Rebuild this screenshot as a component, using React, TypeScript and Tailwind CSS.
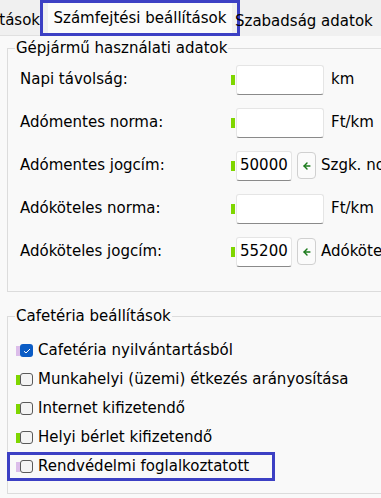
import { ArrowLeft } from "lucide-react"

const font = { fontFamily: '"DejaVu Sans", Tahoma, sans-serif' }

type Row = { label: string; value?: string; unit: string; button?: boolean }

const rows: Row[] = [
  { label: "Napi távolság:", unit: "km" },
  { label: "Adómentes norma:", unit: "Ft/km" },
  { label: "Adómentes jogcím:", value: "50000", unit: "Szgk. normaköltség", button: true },
  { label: "Adóköteles norma:", unit: "Ft/km" },
  { label: "Adóköteles jogcím:", value: "55200", unit: "Adóköteles jogcím", button: true },
]

const checks = [
  { label: "Cafetéria nyilvántartásból", checked: true, mark: "bg-[#dcbdea]" },
  { label: "Munkahelyi (üzemi) étkezés arányosítása", checked: false, mark: "bg-[#7fd600]" },
  { label: "Internet kifizetendő", checked: false, mark: "bg-[#7fd600]" },
  { label: "Helyi bérlet kifizetendő", checked: false, mark: "bg-[#7fd600]" },
  { label: "Rendvédelmi foglalkoztatott", checked: false, mark: "bg-[#dcbdea]" },
]

function Field({ row }: { row: Row }) {
  return (
    <div className="flex h-[43px] items-center">
      <div className="w-[223px] shrink-0 pl-[12px]">{row.label}</div>
      <div className="mr-[1px] h-[10px] w-[4px] shrink-0 bg-[#7fd600]" />
      {row.value ? (
        <>
          <div className="flex h-[30px] w-[56px] shrink-0 items-center rounded-[3px] border border-[#e5e5e5] border-b-[#8a8a8a] bg-white pl-[3px]">
            {row.value}
          </div>
          <div className="ml-[5px] flex h-[27px] w-[19px] shrink-0 items-center justify-center rounded-[4px] border border-[#d0d0d0] bg-[#fbfbfb]">
            <ArrowLeft size={10} strokeWidth={3.5} className="text-[#1a7a1a]" />
          </div>
          <div className="ml-[5px] whitespace-nowrap">{row.unit}</div>
        </>
      ) : (
        <>
          <div className="h-[30px] w-[88px] shrink-0 rounded-[3px] border border-[#e5e5e5] border-b-[#8a8a8a] bg-white" />
          <div className="ml-[7px] whitespace-nowrap">{row.unit}</div>
        </>
      )}
    </div>
  )
}

function Check({ label, checked, mark }: { label: string; checked: boolean; mark: string }) {
  return (
    <div className="flex h-[29px] items-center">
      <div className={`h-[10px] w-[4px] shrink-0 ${mark}`} />
      {checked ? (
        <div className="flex h-[13px] w-[13px] shrink-0 items-center justify-center rounded-[3px] bg-[#0b5cc5]">
          <svg width="8" height="6" viewBox="0 0 8 6" fill="none">
            <path d="M1 3.2 3 5 7 1" stroke="white" strokeWidth="1" />
          </svg>
        </div>
      ) : (
        <div className="h-[13px] w-[13px] shrink-0 rounded-[3px] border border-[#5a5a5a] bg-[#f4f4f4]" />
      )}
      <div className="ml-[5px] whitespace-nowrap">{label}</div>
    </div>
  )
}

export default function App() {
  return (
    <div style={font} className="h-[498px] w-[381px] overflow-hidden bg-[#f9f9f9] text-[15px] text-black">
      {/* tabs */}
      <div className="flex h-[36px] items-end bg-[#f0f0f0]">
        <div className="flex h-[30px] w-[40px] shrink-0 items-center justify-end overflow-hidden whitespace-nowrap border-b border-[#e0e0e0]">
          ítások
        </div>
        <div className="flex h-[36px] w-[200px] shrink-0 items-center justify-center border-[3px] border-[#3c40c4]">
          <div className="flex h-[30px] w-[184px] items-center justify-center whitespace-nowrap bg-[#fbfbfb]">
            Számfejtési beállítások
          </div>
        </div>
        <div className="relative -ml-[5px] flex h-[30px] items-center whitespace-nowrap">Szabadság adatok</div>
      </div>

      {/* vehicle group */}
      <div className="ml-[7px] mt-[12px] w-[400px] border border-[#dcdcdc] pb-[18px]">
        <div className="-mt-[10px] ml-[7px] w-fit bg-[#f9f9f9] px-[1px] leading-[18px]">
          Gépjármű használati adatok
        </div>
        <div className="mt-[1px]">
          {rows.map((r) => (
            <Field key={r.label} row={r} />
          ))}
        </div>
      </div>

      {/* cafeteria group */}
      <div className="ml-[7px] mt-[24px] w-[400px] border border-[#dcdcdc] pb-[12px]">
        <div className="-mt-[10px] ml-[7px] w-fit bg-[#f9f9f9] px-[1px] leading-[18px]">
          Cafetéria beállítások
        </div>
        <div className="mt-[11px] pl-[8px]">
          {checks.map((c, i) =>
            i === checks.length - 1 ? (
              <div key={c.label} className="-ml-[9px] w-[268px] border-[3px] border-[#3c40c4] pl-[6px]">
                <div className="-my-[3px]">
                  <Check {...c} />
                </div>
              </div>
            ) : (
              <Check key={c.label} {...c} />
            ),
          )}
        </div>
      </div>
    </div>
  )
}
